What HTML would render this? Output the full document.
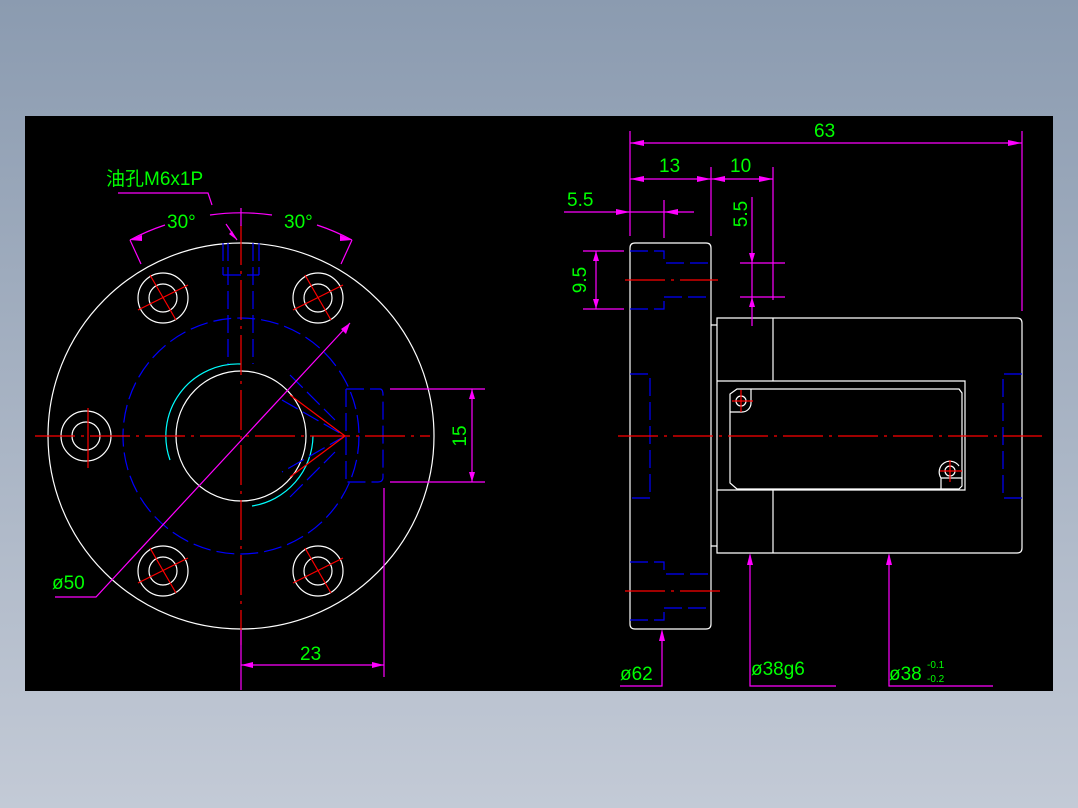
<!DOCTYPE html><html><head><style>
html,body{margin:0;padding:0}
body{width:1078px;height:808px;background:linear-gradient(#8b9bb0,#c3cad6);position:relative;overflow:hidden}
svg{position:absolute;left:0;top:0}
text{font-family:"Liberation Sans","Noto Sans CJK SC",sans-serif;fill:#00ff00;font-size:19px}
</style></head><body>
<svg width="1078" height="808" viewBox="0 0 1078 808">
<rect x="25" y="116" width="1028" height="575" fill="#000"/>
<g fill="none" stroke-width="1.2">
<g stroke="#fff">
<circle cx="241" cy="436" r="193"/>
<circle cx="241" cy="436" r="65"/>
<circle cx="163" cy="298" r="25"/><circle cx="163" cy="298" r="14"/>
<circle cx="318" cy="298" r="25"/><circle cx="318" cy="298" r="14"/>
<circle cx="86" cy="436" r="25"/><circle cx="86" cy="436" r="14"/>
<circle cx="163" cy="571" r="25"/><circle cx="163" cy="571" r="14"/>
<circle cx="318" cy="571" r="25"/><circle cx="318" cy="571" r="14"/>
</g>
<path d="M170 460 A72 72 0 0 1 241 364" stroke="#0ff"/>
<path d="M252 506 A72 72 0 0 0 313 436" stroke="#0ff"/>
<g stroke="#00f" stroke-dasharray="18 6">
<circle cx="241" cy="436" r="118"/>
<path d="M228 243V364M253 243V364M223 243V275M259 243V275M223 275H259"/>
<path d="M346 389H380Q383 389 383 395V477Q383 482 378 482H346M346 389V482"/>
<path d="M290 375L335 420M290 497L335 452M282 400L345 436L282 472"/>
</g>
<g stroke="#f00" stroke-dasharray="40 6 3 6">
<path d="M35 436H430M241 225V645"/>
</g>
<g stroke="#f00">
<path d="M138 310L188 285M150 275L176 320M293 310L343 285M305 275L331 320M88 408V468M138 583L188 558M150 548L176 593M293 583L343 558M305 548L331 593"/>
<path d="M345 436L290 395M345 436L290 477"/>
</g>
<g stroke="#f0f">
<path d="M350 323L96 597H55"/>
<path d="M390 389H485M390 482H485M472 389V482"/>
<path d="M241 630V690M384 488V677M241 665H384"/>
<path d="M130 240A223 223 0 0 1 165 225M210 215A223 223 0 0 1 272 215M317 225A223 223 0 0 1 352 240"/>
<path d="M130 240L141 264M352 240L341 264M241 208V226M118 193H208L212 205M226 224L237 240"/>
</g>
<g fill="#f0f" stroke="none">
<path d="M472 389l-3 10h6zM472 482l-3-10h6zM241 665l12-3v6zM384 665l-12-3v6zM350 323l-4 11-5-5zM130 240l12-5 0 6zM352 240l-12-5 0 6zM237 240l-8-6 3-3z"/>
</g>
<g stroke="#fff">
<path d="M635 243H706Q711 243 711 248V624Q711 629 706 629H635Q630 629 630 624V248Q630 243 635 243Z"/>
<path d="M717 318H1017Q1022 318 1022 323V548Q1022 553 1017 553H717Z"/>
<path d="M711 325H717M711 546H717M773 318V381M773 490V553"/>
<path d="M717 381H965V490H717"/>
<path d="M737 389H959L962 393V486L959 489H737L730 483V394Z"/>
<path d="M730 412H742A9 9 0 0 0 751 403V389"/><circle cx="741" cy="401" r="5"/>
<path d="M962 478H941V489M941 478A9 9 0 0 1 959 466"/><circle cx="950" cy="471" r="5"/>
</g>
<g stroke="#00f" stroke-dasharray="18 6">
<path d="M630 251H664V263H711M664 297H711M630 309H664V297"/>
<path d="M630 562H664V574H711M664 608H711M630 620H664V608"/>
<path d="M630 374H650V498H630M1022 374H1003V498H1022"/>
</g>
<g stroke="#f00" stroke-dasharray="40 6 3 6">
<path d="M618 436H1042M625 280H718M625 591H720"/>
</g>
<g stroke="#f00"><path d="M732 401H753M741 390V412M940 471H962M950 460V482"/></g>
<g stroke="#f0f">
<path d="M630 131V236M1022 131V311M630 143H1022"/>
<path d="M711 167V236M773 167V300M630 179H773"/>
<path d="M564 212H694M664 200V238"/>
<path d="M752 197V326M740 263H785M740 297H785"/>
<path d="M583 251H624M583 309H624M596 251V309"/>
<path d="M662 633V686H620M750 555V686H836M889 555V686H993"/>
</g>
<g fill="#f0f" stroke="none">
<path d="M630 143l14-3v6zM1022 143l-14-3v6zM630 179l14-3v6zM711 179l-14-3v6zM711 179l14-3v6zM773 179l-14-3v6zM630 212l-14-3v6zM664 212l14-3v6zM752 263l-3-10h6zM752 297l3 10h-6zM596 251l-3 10h6zM596 309l-3-10h6zM662 629l-3 12h6zM750 553l-3 12h6zM889 553l-3 12h6z"/>
</g>
</g>
<text x="106" y="185">油孔M6x1P</text>
<text x="167" y="228">30°</text>
<text x="284" y="228">30°</text>
<text x="52" y="589">ø50</text>
<text x="300" y="660">23</text>
<text transform="translate(466 436) rotate(-90)" text-anchor="middle">15</text>
<text x="814" y="137">63</text>
<text x="659" y="172">13</text>
<text x="730" y="172">10</text>
<text x="567" y="206">5.5</text>
<text transform="translate(747 214) rotate(-90)" text-anchor="middle">5.5</text>
<text transform="translate(586 280) rotate(-90)" text-anchor="middle">9.5</text>
<text x="620" y="680">ø62</text>
<text x="751" y="675">ø38g6</text>
<text x="889" y="680">ø38</text>
<text x="927" y="668" style="font-size:10px">-0.1</text>
<text x="927" y="682" style="font-size:10px">-0.2</text>
</svg>
</body></html>
